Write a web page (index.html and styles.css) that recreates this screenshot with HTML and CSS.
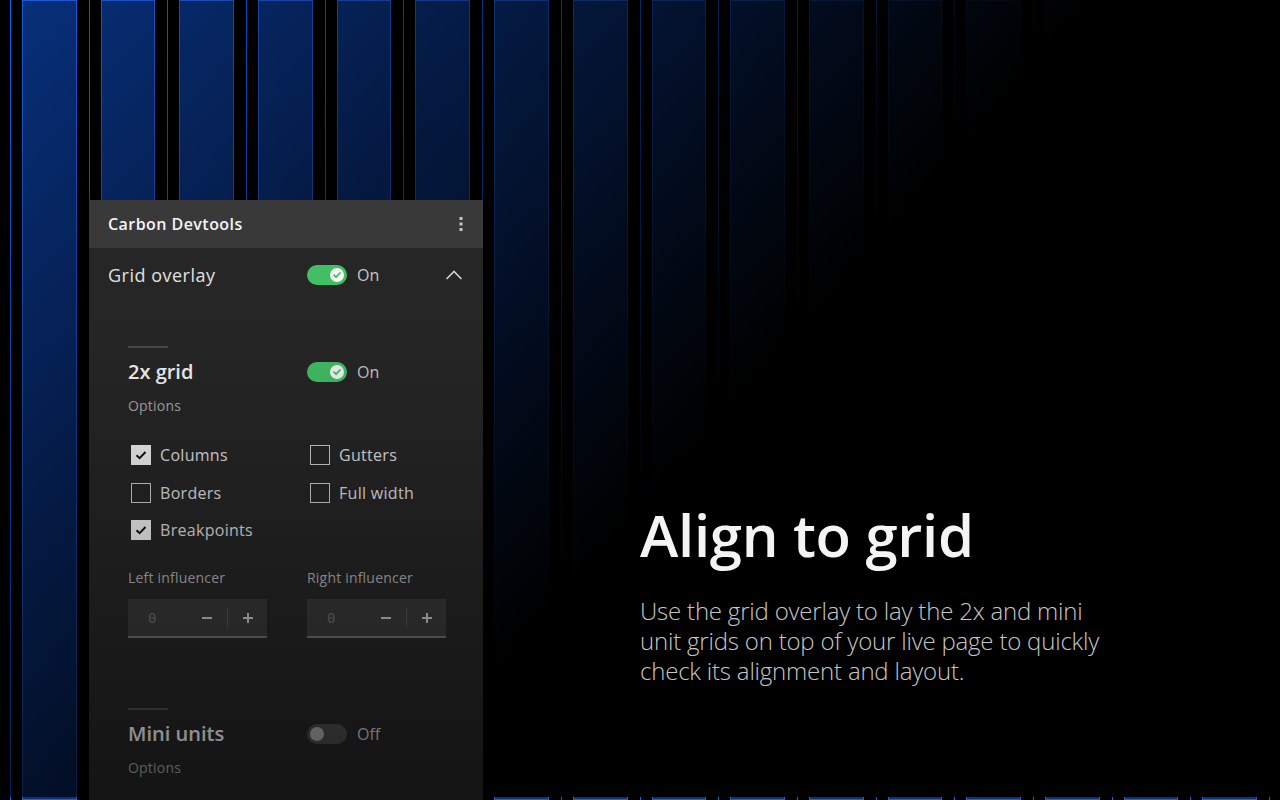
FILE: index.html
```html
<!DOCTYPE html>
<html lang="en">
<head>
<meta charset="utf-8">
<title>Carbon Devtools – Align to grid</title>
<link rel="stylesheet" href="styles.css">
</head>
<body>
<main class="stage">
  <div class="grid-bg" aria-hidden="true">
    <div class="gcol"><div class="blk"></div></div>
    <div class="gcol"><div class="blk"></div></div>
    <div class="gcol"><div class="blk"></div></div>
    <div class="gcol"><div class="blk"></div></div>
    <div class="gcol"><div class="blk"></div></div>
    <div class="gcol"><div class="blk"></div></div>
    <div class="gcol"><div class="blk"></div></div>
    <div class="gcol"><div class="blk"></div></div>
    <div class="gcol"><div class="blk"></div></div>
    <div class="gcol"><div class="blk"></div></div>
    <div class="gcol"><div class="blk"></div></div>
    <div class="gcol"><div class="blk"></div></div>
    <div class="gcol"><div class="blk"></div></div>
    <div class="gcol"><div class="blk"></div></div>
    <div class="gcol"><div class="blk"></div></div>
    <div class="gcol"><div class="blk"></div></div>
  </div>
  <div class="fade" aria-hidden="true"></div>

  <section class="left">
    <div class="panel">
      <header class="panel-head">
        <span class="panel-title">Carbon Devtools</span>
        <svg class="kebab" width="4" height="16" viewBox="0 0 4 16"><rect x="0.5" y="1" width="3" height="3" fill="#c6c6c6"/><rect x="0.5" y="6.5" width="3" height="3" fill="#c6c6c6"/><rect x="0.5" y="12" width="3" height="3" fill="#c6c6c6"/></svg>
      </header>
      <div class="acc-row">
        <span class="acc-title">Grid overlay</span>
        <div class="toggle-wrap">
          <span class="toggle on"><span class="knob"><svg width="14" height="14" viewBox="0 0 14 14"><circle cx="7" cy="7" r="7" fill="#f4f4f4"/><path d="M4 7.2 L6.1 9.2 L10 5" fill="none" stroke="#42be65" stroke-width="1.8" stroke-linecap="round" stroke-linejoin="round"/></svg></span></span>
          <span class="toggle-text">On</span>
        </div>
        <svg class="chev" width="18" height="12" viewBox="0 0 18 12"><path d="M1.5 10 L9 2.5 L16.5 10" fill="none" stroke="#d0d0d0" stroke-width="1.6"/></svg>
      </div>

      <div class="section">
        <div class="rule"></div>
        <div class="sec-row">
          <span class="sec-title">2x grid</span>
          <div class="toggle-wrap">
            <span class="toggle on"><span class="knob"><svg width="14" height="14" viewBox="0 0 14 14"><circle cx="7" cy="7" r="7" fill="#f4f4f4"/><path d="M4 7.2 L6.1 9.2 L10 5" fill="none" stroke="#42be65" stroke-width="1.8" stroke-linecap="round" stroke-linejoin="round"/></svg></span></span>
            <span class="toggle-text">On</span>
          </div>
        </div>
        <div class="opts">Options</div>
        <div class="checks">
          <label class="check"><span class="box checked"><svg width="20" height="20" viewBox="0 0 20 20"><path d="M5.5 10.2 L8.6 13.2 L14.5 7" fill="none" stroke="#161616" stroke-width="2"/></svg></span>Columns</label>
          <label class="check"><span class="box"></span>Gutters</label>
          <label class="check"><span class="box"></span>Borders</label>
          <label class="check"><span class="box"></span>Full width</label>
          <label class="check"><span class="box checked"><svg width="20" height="20" viewBox="0 0 20 20"><path d="M5.5 10.2 L8.6 13.2 L14.5 7" fill="none" stroke="#161616" stroke-width="2"/></svg></span>Breakpoints</label>
        </div>
        <div class="inputs">
          <div class="field">
            <span class="field-label">Left influencer</span>
            <div class="num">
              <span class="num-val">0</span>
              <span class="num-btn"><svg width="12" height="12" viewBox="0 0 12 12"><path d="M1 6 H11" stroke="#c6c6c6" stroke-width="2"/></svg></span>
              <span class="num-sep"></span>
              <span class="num-btn"><svg width="12" height="12" viewBox="0 0 12 12"><path d="M1 6 H11 M6 1 V11" stroke="#c6c6c6" stroke-width="2"/></svg></span>
            </div>
          </div>
          <div class="field">
            <span class="field-label">Right influencer</span>
            <div class="num">
              <span class="num-val">0</span>
              <span class="num-btn"><svg width="12" height="12" viewBox="0 0 12 12"><path d="M1 6 H11" stroke="#c6c6c6" stroke-width="2"/></svg></span>
              <span class="num-sep"></span>
              <span class="num-btn"><svg width="12" height="12" viewBox="0 0 12 12"><path d="M1 6 H11 M6 1 V11" stroke="#c6c6c6" stroke-width="2"/></svg></span>
            </div>
          </div>
        </div>
      </div>

      <div class="section section-mini">
        <div class="rule"></div>
        <div class="sec-row">
          <span class="sec-title">Mini units</span>
          <div class="toggle-wrap">
            <span class="toggle off"><span class="knob"></span></span>
            <span class="toggle-text">Off</span>
          </div>
        </div>
        <div class="opts">Options</div>
      </div>
    </div>
  </section>

  <section class="right">
    <h1 class="headline">Align to grid</h1>
    <p class="lead">Use the grid overlay to lay the 2x and mini<br>unit grids on top of your live page to quickly<br>check its alignment and layout.</p>
  </section>
</main>
</body>
</html>
```

FILE: styles.css
```css
* { box-sizing: border-box; }

html, body {
  margin: 0;
  padding: 0;
  background: #000;
}

body {
  width: 1280px;
  height: 800px;
  overflow: hidden;
  font-family: "Open Sans", "Noto Sans", "Liberation Sans", sans-serif;
  color: #f4f4f4;
}

.stage {
  position: relative;
  width: 1280px;
  height: 800px;
  overflow: hidden;
  display: grid;
  grid-template-columns: 640px 640px;
}

/* background grid overlay */
.grid-bg {
  position: absolute;
  top: 0;
  bottom: 0;
  left: 10px;
  right: 10px;
  display: flex;
  border-right: 1px solid #0f62fe;
}

.gcol {
  flex: 1 1 0;
  border-left: 1px solid #0f62fe;
  padding: 0 12px 0 11px;
}

.blk {
  height: 100%;
  background: rgba(15, 98, 254, 0.5);
  border: 1px solid rgba(40, 110, 255, 0.75);
}

.fade {
  position: absolute;
  top: 0;
  left: 0;
  right: 0;
  height: 797px;
  background: linear-gradient(131.7deg, rgba(0, 0, 0, 0.02) 0%, rgba(0, 0, 0, 1) 55%);
}

/* left column with panel */
.left {
  position: relative;
  z-index: 2;
  padding: 200px 0 0 89px;
}

.panel {
  position: relative;
  width: 394px;
  height: 620px;
  background: #262626;
  overflow: hidden;
}

.panel::after {
  content: "";
  position: absolute;
  left: 0;
  right: 0;
  top: 110px;
  bottom: 0;
  background: linear-gradient(to bottom, rgba(0, 0, 0, 0) 0%, rgba(0, 0, 0, 0.5) 100%);
  pointer-events: none;
}

.panel-head {
  height: 48px;
  background: #393939;
  display: flex;
  align-items: center;
  justify-content: space-between;
  padding: 0 20px 0 19px;
}

.panel-title {
  font-size: 16px;
  font-weight: 600;
  letter-spacing: 0.45px;
  color: #f4f4f4;
}

.kebab { display: block; }

.acc-row {
  height: 54px;
  display: grid;
  grid-template-columns: 199px 1fr auto;
  align-items: center;
  padding: 0 20px 0 19px;
}

.acc-title {
  font-size: 18px;
  line-height: 24px;
  font-weight: 400;
  letter-spacing: 0.5px;
  color: #e0e0e0;
}

.chev { display: block; }

.toggle-wrap {
  display: flex;
  align-items: center;
  gap: 10px;
}

.toggle {
  width: 40px;
  height: 20px;
  border-radius: 10px;
  display: flex;
  align-items: center;
  padding: 0 3px;
}

.toggle.on {
  background: #42be65;
  justify-content: flex-end;
}

.toggle.off {
  background: #4a4a4a;
  justify-content: flex-start;
}

.knob {
  width: 14px;
  height: 14px;
  border-radius: 50%;
  display: block;
}

.knob svg { display: block; }

.toggle.off .knob { background: #a8a8a8; }

.toggle-text {
  font-size: 16px;
  line-height: 20px;
  color: #c6c6c6;
}

.section {
  padding: 45px 0 0 39px;
}

.rule {
  width: 40px;
  height: 2px;
  background: #4a4a4a;
  margin-top: -1px;
}

.sec-row {
  margin-top: 14px;
  height: 20px;
  display: grid;
  grid-template-columns: 179px 1fr;
  grid-template-rows: 20px;
  align-items: center;
}

.sec-title {
  font-size: 20px;
  line-height: 20px;
  font-weight: 600;
  color: #f4f4f4;
}

.opts {
  margin-top: 14px;
  font-size: 14px;
  line-height: 20px;
  letter-spacing: 0.2px;
  color: #a8a8a8;
}

.checks {
  margin-top: 29px;
  display: grid;
  grid-template-columns: 179px 1fr;
  row-gap: 17.5px;
}

.check {
  height: 20px;
  display: flex;
  align-items: center;
  gap: 9px;
  padding-left: 3px;
  font-size: 16px;
  letter-spacing: 0.3px;
  color: #e0e0e0;
}

.box {
  width: 20px;
  height: 20px;
  border: 1.5px solid #d0d0d0;
  display: block;
  flex: none;
}

.box.checked {
  background: #f4f4f4;
  border: none;
}

.box svg { display: block; }

.inputs {
  margin-top: 28px;
  display: grid;
  grid-template-columns: 179px 139px;
}

.field {
  display: flex;
  flex-direction: column;
  gap: 11px;
}

.field-label {
  font-size: 14px;
  line-height: 20px;
  letter-spacing: 0.2px;
  color: #b4b4b4;
}

.num {
  width: 139px;
  height: 39px;
  background: #393939;
  border-bottom: 2px solid #6f6f6f;
  display: flex;
  align-items: center;
  padding: 0 13px 0 20px;
}

.num-val {
  font-family: "DejaVu Sans Mono", monospace;
  font-size: 14px;
  color: #6f6f6f;
  flex: 1;
}

.num-btn {
  width: 12px;
  display: block;
}

.num-btn svg { display: block; }

.num-sep {
  width: 1px;
  height: 20px;
  background: #525252;
  margin: 0 14px 0 14px;
}

.section-mini {
  padding-top: 71px;
}

/* right column */
.right {
  position: relative;
  z-index: 2;
  padding-top: 500px;
}

.headline {
  margin: 0;
  font-size: 58px;
  line-height: 70px;
  font-weight: 600;
  color: #f4f4f4;
  letter-spacing: -0.3px;
}

.lead {
  margin: 26px 0 0;
  font-size: 24px;
  line-height: 30px;
  font-weight: 300;
  letter-spacing: -0.2px;
  color: #c6c6c6;
}
```
